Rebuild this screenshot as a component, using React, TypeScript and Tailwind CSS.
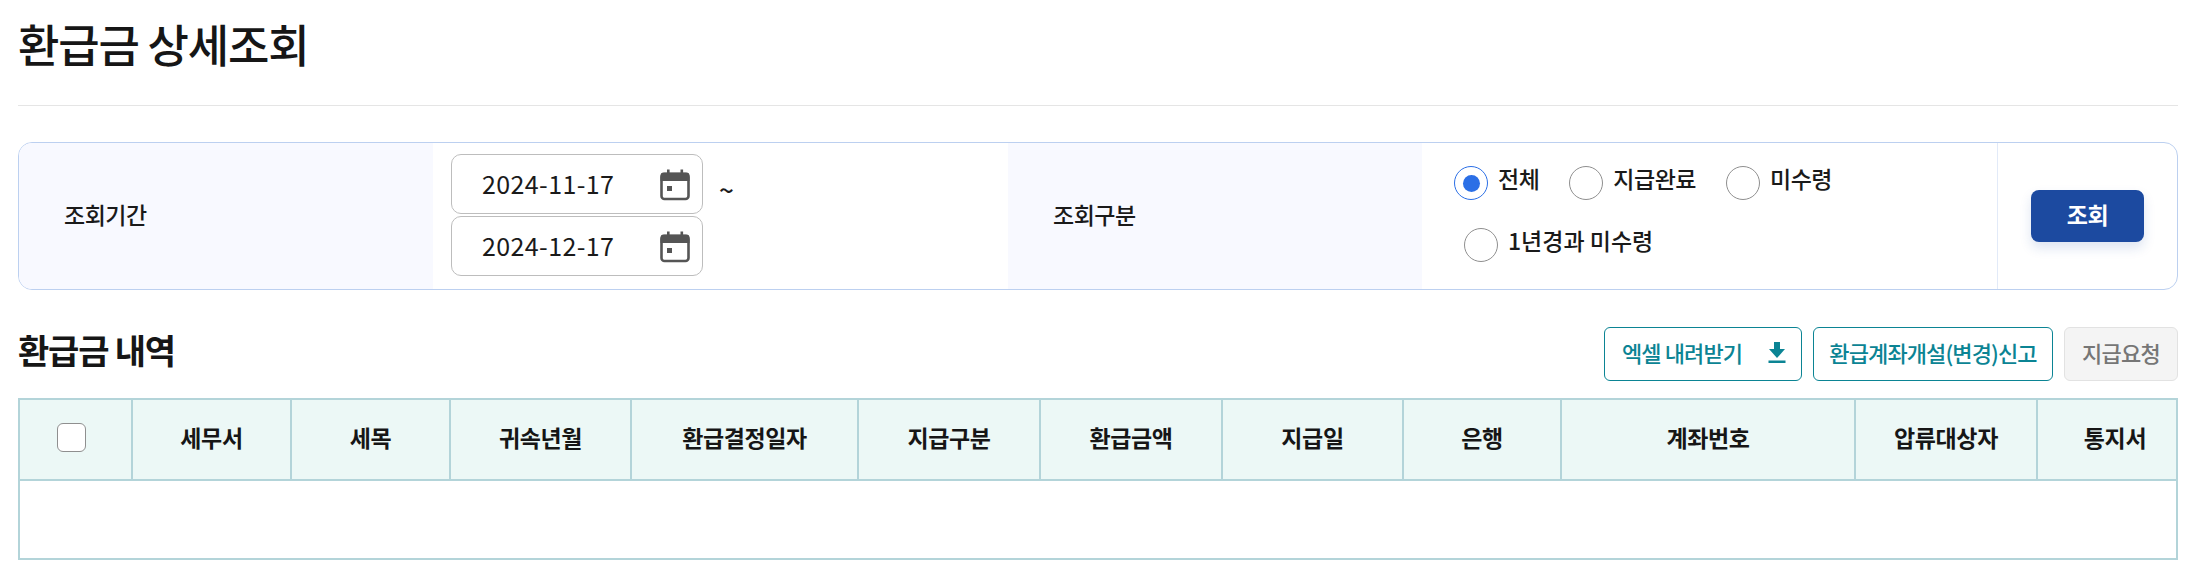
import React from "react";

const FONT = "font-['Noto_Sans_CJK_KR','Noto_Sans',sans-serif]";

function CalendarIcon() {
  return (
    <svg width="32" height="32" viewBox="0 0 32 32" fill="none" className="relative top-[1px]">
      <rect x="2.5" y="5" width="27" height="25" rx="3" fill="none" stroke="#555" strokeWidth="2.6" />
      <path d="M1.5 6.5a3 3 0 0 1 3-3h23a3 3 0 0 1 3 3V12h-29z" fill="#555" />
      <rect x="8" y="0.5" width="2.6" height="5" fill="#555" />
      <rect x="21.5" y="0.5" width="2.6" height="5" fill="#555" />
      <rect x="8" y="17" width="5" height="5" fill="#555" />
    </svg>
  );
}

function DateField({ value }: { value: string }) {
  return (
    <div className="flex h-[60px] w-[252px] items-center justify-between rounded-[10px] border border-[#bdbdbd] bg-white pl-[30px] pr-[11px]">
      <span className="relative -top-[1px] text-[25px] leading-none tracking-[0.4px] text-[#1a1a1a]">{value}</span>
      <CalendarIcon />
    </div>
  );
}

function Radio({
  label,
  checked,
  className,
  textClass,
}: {
  label: string;
  checked?: boolean;
  className?: string;
  textClass?: string;
}) {
  return (
    <label className={`flex items-center gap-[10px] ${className ?? ""}`}>
      <span
        className={`flex h-[34px] w-[34px] items-center justify-center rounded-full border bg-white ${
          checked ? "border-[#2b6fe6]" : "border-[#8f8f8f]"
        }`}
      >
        {checked && <span className="h-[17px] w-[17px] rounded-full bg-[#2b6fe6]" />}
      </span>
      <span
        className={`relative -top-[5px] text-[23px] font-medium leading-none text-[#1a1a1a] ${
          textClass ?? "tracking-[-0.5px]"
        }`}
      >
        {label}
      </span>
    </label>
  );
}

const columns = [
  { label: "", w: "w-[113px]", extra: "" },
  { label: "세무서", w: "w-[159px]", extra: "" },
  { label: "세목", w: "w-[159px]", extra: "" },
  { label: "귀속년월", w: "w-[181px]", extra: "" },
  { label: "환급결정일자", w: "w-[227px]", extra: "" },
  { label: "지급구분", w: "w-[182px]", extra: "" },
  { label: "환급금액", w: "w-[182px]", extra: "" },
  { label: "지급일", w: "w-[181px]", extra: "" },
  { label: "은행", w: "w-[158px]", extra: "" },
  { label: "계좌번호", w: "w-[294px]", extra: "" },
  { label: "압류대상자", w: "w-[182px]", extra: "" },
  { label: "통지서", w: "w-auto", extra: "pl-[16px]" },
];

export default function App() {
  return (
    <div className={`${FONT} h-[568px] w-[2193px] overflow-hidden bg-white pl-[18px] pr-[15px] text-[#1a1a1a]`}>
      <div className="h-[106px] border-b border-[#e5e5e5] pt-[16px]">
        <h1 className="text-[45px] font-medium leading-[56px] tracking-[-1.2px] text-[#161616]">환급금 상세조회</h1>
      </div>

      <div className="mt-[36px] flex h-[148px] overflow-hidden rounded-[14px] border border-[#bcd0f0]">
        <div className="flex w-[414px] items-center bg-[#f8f9ff] pb-[4px] pl-[45px] text-[23px] font-medium tracking-[-0.5px]">조회기간</div>
        <div className="flex w-[575px] items-start gap-[16px] pl-[18px] pt-[11px]">
          <div className="flex flex-col gap-[2px]">
            <DateField value="2024-11-17" />
            <DateField value="2024-12-17" />
          </div>
          <span className="mt-[22px] text-[26px] font-medium leading-none">~</span>
        </div>
        <div className="flex w-[414px] items-center bg-[#f8f9ff] pb-[4px] pl-[45px] text-[23px] font-medium tracking-[-0.5px]">조회구분</div>
        <div className="w-[575px] pl-[32px] pt-[23px]">
          <div className="flex gap-[30px]">
            <Radio label="전체" checked />
            <Radio label="지급완료" />
            <Radio label="미수령" />
          </div>
          <Radio label="1년경과 미수령" className="ml-[10px] mt-[28px]" textClass="tracking-[0px]" />
        </div>
        <div className="flex flex-1 items-center justify-center border-l border-[#e2eaf8]">
          <button className="h-[52px] w-[113px] rounded-[8px] bg-[#1c4aa0] pb-[3px] text-[23px] font-bold tracking-[-0.5px] text-white shadow-[0_6px_12px_rgba(28,74,160,0.15)]">
            조회
          </button>
        </div>
      </div>

      <div className="mt-[37px] flex h-[54px] items-center justify-between">
        <h2 className="relative -top-[5px] text-[34px] font-bold tracking-[-1.2px] text-[#161616]">환급금 내역</h2>
        <div className="flex gap-[11px]">
          <button className="flex h-[54px] w-[198px] items-center justify-between rounded-[6px] border border-[#0b8494] bg-white pb-[4px] pl-[17px] pr-[15px] text-[22px] font-medium tracking-[-0.9px] text-[#0b8494]">
            엑셀 내려받기
            <svg width="18" height="22" viewBox="0 0 18 22" fill="#0b8494" className="relative top-[1px]">
              <path d="M6 0h6v7h5l-8 9-8-9h5z" />
              <rect x="0.5" y="18.5" width="17" height="2.5" />
            </svg>
          </button>
          <button className="h-[54px] w-[240px] rounded-[6px] border border-[#0b8494] bg-white pb-[4px] text-[22px] font-medium tracking-[-0.9px] text-[#0b8494]">
            환급계좌개설(변경)신고
          </button>
          <button className="h-[54px] w-[114px] rounded-[6px] border border-[#e2e2e2] bg-[#f4f4f4] pb-[4px] text-[22px] font-medium tracking-[-0.7px] text-[#767676]">
            지급요청
          </button>
        </div>
      </div>

      <table className="mt-[17px] w-[2160px] table-fixed border-collapse">
        <thead>
          <tr className="h-[81px] bg-[#ecf8f6]">
            {columns.map((c, i) => (
              <th key={i} className={`${c.w} ${c.extra} border-2 border-[#b3d4d9] pb-[4px] text-[23px] font-bold tracking-[-0.4px] text-[#161616]`}>
                {i === 0 ? (
                  <span className="ml-[37px] block h-[29px] w-[29px] rounded-[6px] border border-[#8f8f8f] bg-white" />
                ) : (
                  c.label
                )}
              </th>
            ))}
          </tr>
        </thead>
        <tbody>
          <tr className="h-[79px]">
            <td colSpan={12} className="border-2 border-[#b3d4d9]" />
          </tr>
        </tbody>
      </table>
    </div>
  );
}
